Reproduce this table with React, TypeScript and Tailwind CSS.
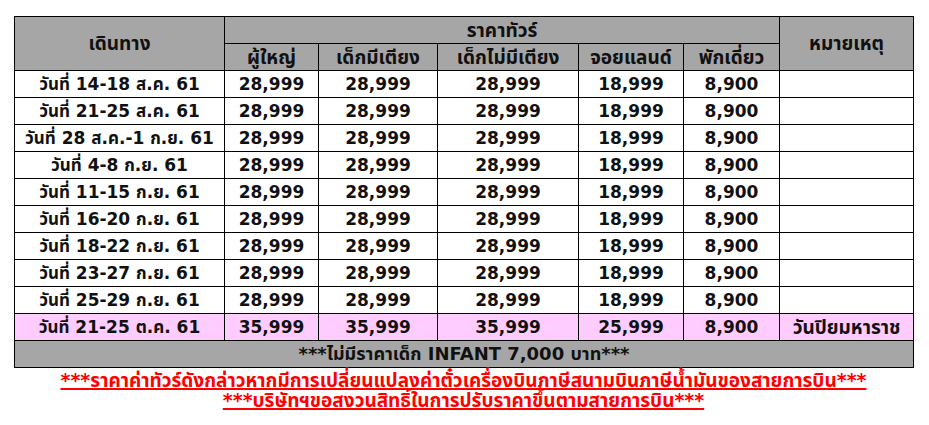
const rows = [
  { date: 'วันที่ 14-18 ส.ค. 61', adult: '28,999', bed: '28,999', noBed: '28,999', joy: '18,999', single: '8,900', note: '' },
  { date: 'วันที่ 21-25 ส.ค. 61', adult: '28,999', bed: '28,999', noBed: '28,999', joy: '18,999', single: '8,900', note: '' },
  { date: 'วันที่ 28 ส.ค.-1 ก.ย. 61', adult: '28,999', bed: '28,999', noBed: '28,999', joy: '18,999', single: '8,900', note: '' },
  { date: 'วันที่ 4-8 ก.ย. 61', adult: '28,999', bed: '28,999', noBed: '28,999', joy: '18,999', single: '8,900', note: '' },
  { date: 'วันที่ 11-15 ก.ย. 61', adult: '28,999', bed: '28,999', noBed: '28,999', joy: '18,999', single: '8,900', note: '' },
  { date: 'วันที่ 16-20 ก.ย. 61', adult: '28,999', bed: '28,999', noBed: '28,999', joy: '18,999', single: '8,900', note: '' },
  { date: 'วันที่ 18-22 ก.ย. 61', adult: '28,999', bed: '28,999', noBed: '28,999', joy: '18,999', single: '8,900', note: '' },
  { date: 'วันที่ 23-27 ก.ย. 61', adult: '28,999', bed: '28,999', noBed: '28,999', joy: '18,999', single: '8,900', note: '' },
  { date: 'วันที่ 25-29 ก.ย. 61', adult: '28,999', bed: '28,999', noBed: '28,999', joy: '18,999', single: '8,900', note: '' },
  { date: 'วันที่ 21-25 ต.ค. 61', adult: '35,999', bed: '35,999', noBed: '35,999', joy: '25,999', single: '8,900', note: 'วันปิยมหาราช', highlight: true },
];

const cell = 'border border-black h-[27px] p-0 text-center align-middle leading-none';
// Thai-only cells: the Thai fallback runs narrower than Tahoma, so bump it
const thai = cell + ' text-[19px]';

export default function App() {
  return (
    <div
      className="w-[929px] h-[425px] bg-white pt-4 pl-[14px] text-[#111] font-bold"
      style={{ fontFamily: 'Tahoma, "DejaVu Sans", "Noto Sans Thai", "Noto Sans Thai UI", Loma, Garuda, "Noto Sans", sans-serif' }}
    >
      <table className="border-collapse w-[899px] table-fixed text-[17px]">
        <colgroup>
          <col className="w-[210px]" />
          <col className="w-[94px]" />
          <col className="w-[119px]" />
          <col className="w-[141px]" />
          <col className="w-[105px]" />
          <col className="w-[96px]" />
          <col className="w-[134px]" />
        </colgroup>
        <thead>
          <tr className="bg-[#a6a6a6]">
            <th rowSpan={2} className={thai}>เดินทาง</th>
            <th colSpan={5} className={thai}>ราคาทัวร์</th>
            <th rowSpan={2} className={thai}>หมายเหตุ</th>
          </tr>
          <tr className="bg-[#a6a6a6]">
            <th className={thai}>ผู้ใหญ่</th>
            <th className={thai}>เด็กมีเตียง</th>
            <th className={thai}>เด็กไม่มีเตียง</th>
            <th className={thai}>จอยแลนด์</th>
            <th className={thai}>พักเดี่ยว</th>
          </tr>
        </thead>
        <tbody>
          {rows.map((r) => (
            <tr key={r.date} className={r.highlight ? 'bg-[#ffccff]' : 'bg-white'}>
              <td className={cell}>{r.date}</td>
              <td className={cell}>{r.adult}</td>
              <td className={cell}>{r.bed}</td>
              <td className={cell}>{r.noBed}</td>
              <td className={cell}>{r.joy}</td>
              <td className={cell}>{r.single}</td>
              <td className={thai}>{r.note}</td>
            </tr>
          ))}
          <tr className="bg-[#a6a6a6]">
            <td colSpan={7} className={cell + ' text-[18px]'}>***ไม่มีราคาเด็ก INFANT 7,000 บาท***</td>
          </tr>
        </tbody>
      </table>
      <div className="w-[899px] text-center text-[#ff0000] text-[19px] leading-[20px] underline decoration-2 mt-[2px]">
        <p>***ราคาค่าทัวร์ดังกล่าวหากมีการเปลี่ยนแปลงค่าตั๋วเครื่องบินภาษีสนามบินภาษีน้ำมันของสายการบิน***</p>
        <p>***บริษัทฯขอสงวนสิทธิ์ในการปรับราคาขึ้นตามสายการบิน***</p>
      </div>
    </div>
  );
}
